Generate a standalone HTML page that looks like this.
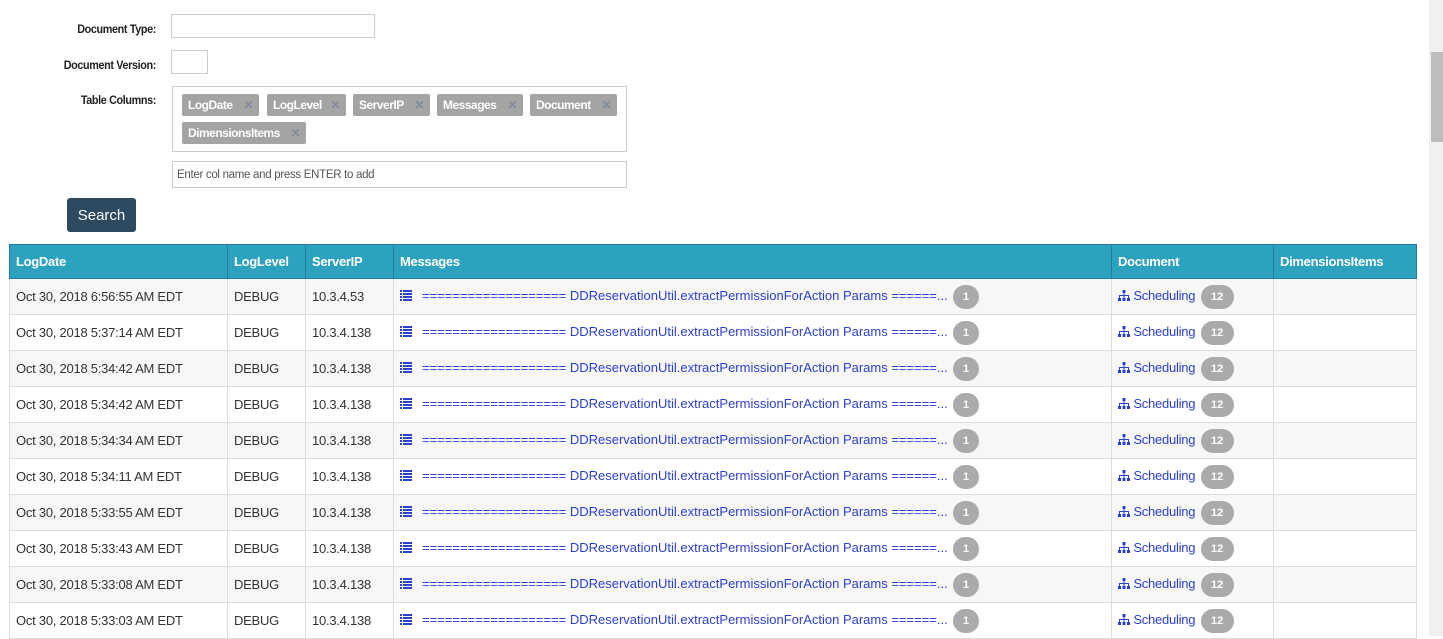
<!DOCTYPE html>
<html><head><style>
body{margin:0;width:1443px;height:636px;overflow:hidden;background:#fff;font-family:"Liberation Sans",sans-serif;position:relative}
.lbl{position:absolute;font-size:12px;color:#222;text-align:right;width:156px;letter-spacing:-0.4px;font-weight:bold;transform:scaleX(.9);transform-origin:right}
.inp{position:absolute;border:1px solid #ccc;background:#fff;box-sizing:border-box}
.tag{position:absolute;height:22px;background:#a4a4a4;border-radius:2px;color:#fff;font-size:12px;font-weight:bold;line-height:22px;padding:0 6px;box-sizing:border-box;letter-spacing:-0.5px;white-space:nowrap}
.tag span{color:#7e8b9a;position:absolute;right:6px}
.btn{position:absolute;left:67px;top:198px;width:69px;height:34px;background:#2d4a60;border-radius:3px;color:#fff;font-size:15px;line-height:36px;text-align:center}
table{position:absolute;left:9px;top:244px;border-collapse:collapse;width:1408px;font-size:13px;color:#333;letter-spacing:-0.25px;table-layout:fixed}
th{background:#2ca2bf;color:#fff;text-align:left;font-size:13px;height:33px;padding:0 6px;border:1px solid #1f7f9a;letter-spacing:-0.3px}
td{height:35px;padding:0 6px;border:1px solid #ddd;white-space:nowrap;overflow:hidden}
tr:nth-child(odd) td{background:#f7f7f7}
a{color:#2a3fd4;text-decoration:none}
.b{display:inline-block;background:#aaa;color:#fff;border-radius:12px;font-size:11px;font-weight:bold;text-align:center;height:24px;line-height:24px;vertical-align:middle;letter-spacing:0}
.sb{position:absolute;left:1429px;top:0;width:14px;height:636px;background:#f0f0f0}
.th2{position:absolute;left:1431px;top:52px;width:12px;height:90px;background:#bdbdbd}
svg{vertical-align:-1px}
</style></head><body>
<div class="lbl" style="left:0;top:22px">Document Type:</div>
<div class="inp" style="left:171px;top:14px;width:204px;height:24px"></div>
<div class="lbl" style="left:0;top:58px">Document Version:</div>
<div class="inp" style="left:171px;top:50px;width:37px;height:24px"></div>
<div class="lbl" style="left:0;top:93px">Table Columns:</div>
<div class="inp" style="left:172px;top:86px;width:455px;height:66px"></div>
<div class="tag" style="left:182px;top:94px;width:77px">LogDate<span>✕</span></div>
<div class="tag" style="left:267px;top:94px;width:79px">LogLevel<span>✕</span></div>
<div class="tag" style="left:353px;top:94px;width:77px">ServerIP<span>✕</span></div>
<div class="tag" style="left:437px;top:94px;width:86px">Messages<span>✕</span></div>
<div class="tag" style="left:530px;top:94px;width:87px">Document<span>✕</span></div>
<div class="tag" style="left:182px;top:122px;width:124px">DimensionsItems<span>✕</span></div>
<div class="inp" style="left:172px;top:161px;width:455px;height:27px;font-size:11.5px;color:#555;line-height:27px;padding-left:4px;letter-spacing:-0.3px">Enter col name and press ENTER to add</div>
<div class="btn">Search</div>
<table>
<colgroup><col style="width:218px"><col style="width:78px"><col style="width:88px"><col style="width:718px"><col style="width:162px"><col></colgroup>
<tr><th>LogDate</th><th>LogLevel</th><th>ServerIP</th><th>Messages</th><th>Document</th><th>DimensionsItems</th></tr>
</table>
<div class="sb"></div><div class="th2"></div>
<script>
var li='<svg width="12" height="11" viewBox="0 0 12 11" fill="#2a3fd4"><rect x="0" y="0" width="2" height="2"/><rect x="3" y="0" width="9" height="2"/><rect x="0" y="3" width="2" height="2"/><rect x="3" y="3" width="9" height="2"/><rect x="0" y="6" width="2" height="2"/><rect x="3" y="6" width="9" height="2"/><rect x="0" y="9" width="2" height="2"/><rect x="3" y="9" width="9" height="2"/></svg>';
var si='<svg width="12" height="11" viewBox="0 0 12 11" fill="#2a3fd4"><rect x="4.5" y="0" width="3" height="3"/><rect x="5.5" y="3" width="1" height="2"/><rect x="1" y="5" width="10" height="1"/><rect x="1" y="5" width="1" height="3"/><rect x="10" y="5" width="1" height="3"/><rect x="5.5" y="5" width="1" height="3"/><rect x="0" y="8" width="3" height="3"/><rect x="4.5" y="8" width="3" height="3"/><rect x="9" y="8" width="3" height="3"/></svg>';
var t=["6:56:55","5:37:14","5:34:42","5:34:42","5:34:34","5:34:11","5:33:55","5:33:43","5:33:08","5:33:03"];
var h="";t.forEach(function(x,i){h+='<tr><td>Oct 30, 2018 '+x+' AM EDT</td><td>DEBUG</td><td>'+(i==0?'10.3.4.53':'10.3.4.138')+'</td><td><a>'+li+'<span style="margin-left:10px;letter-spacing:0">=================== DDReservationUtil.extractPermissionForAction Params ======...</span></a> <span class="b" style="width:26px;margin-left:2px">1</span></td><td><a>'+si+' Scheduling</a> <span class="b" style="width:33px;margin-left:2px">12</span></td><td></td></tr>'});
document.querySelector('table').insertAdjacentHTML('beforeend',h);
</script>
</body></html>
